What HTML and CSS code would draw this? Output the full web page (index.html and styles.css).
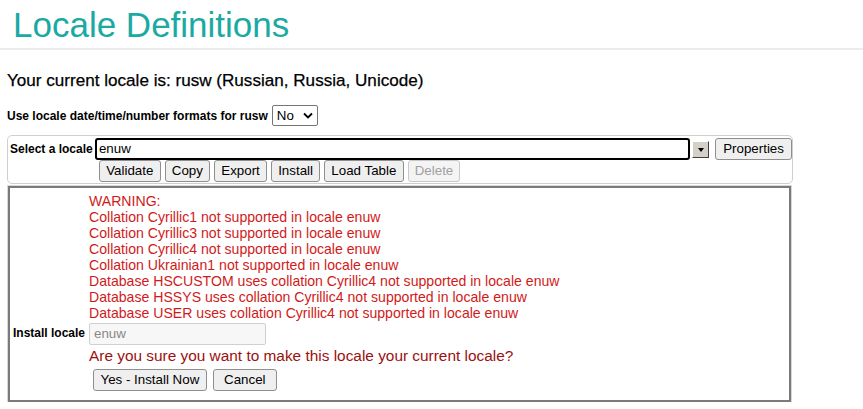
FILE: index.html
```html
<!DOCTYPE html>
<html>
<head>
<meta charset="utf-8">
<title>Locale Definitions</title>
<link rel="stylesheet" href="styles.css">
</head>
<body>
<div class="header">
  <h1 class="title">Locale Definitions</h1>
</div>
<div class="content">
  <div class="current">Your current locale is: rusw (Russian, Russia, Unicode)</div>
  <div class="formats">
    <span class="lbl">Use locale date/time/number formats for rusw</span>
    <div class="select">
      <span>No</span>
      <svg class="chev" width="10" height="7" viewBox="0 0 10 7"><path d="M1 1.5 L5 5.5 L9 1.5" fill="none" stroke="#000" stroke-width="1.8"/></svg>
    </div>
  </div>
  <div class="selbox">
    <div class="row1">
      <span class="lbl lbl-sel">Select a locale</span>
      <div class="combo">enuw</div>
      <div class="drop"><span class="tri"></span></div>
      <div class="btn btn-prop">Properties</div>
    </div>
    <div class="row2">
      <div class="btn">Validate</div>
      <div class="btn">Copy</div>
      <div class="btn">Export</div>
      <div class="btn">Install</div>
      <div class="btn">Load Table</div>
      <div class="btn btn-dis">Delete</div>
    </div>
  </div>
  <div class="panel">
    <div class="cell-empty"></div>
    <div class="warnings">
      <div>WARNING:</div>
      <div>Collation Cyrillic1 not supported in locale enuw</div>
      <div>Collation Cyrillic3 not supported in locale enuw</div>
      <div>Collation Cyrillic4 not supported in locale enuw</div>
      <div>Collation Ukrainian1 not supported in locale enuw</div>
      <div>Database HSCUSTOM uses collation Cyrillic4 not supported in locale enuw</div>
      <div>Database HSSYS uses collation Cyrillic4 not supported in locale enuw</div>
      <div>Database USER uses collation Cyrillic4 not supported in locale enuw</div>
    </div>
    <div class="lbl lbl-inst">Install locale</div>
    <div class="instcell"><div class="instinput">enuw</div></div>
    <div class="cell-empty"></div>
    <div class="question">Are you sure you want to make this locale your current locale?</div>
    <div class="cell-empty"></div>
    <div class="actions">
      <div class="btn">Yes - Install Now</div>
      <div class="btn btn-cancel">Cancel</div>
    </div>
  </div>
</div>
</body>
</html>
```
FILE: styles.css
```css
html, body {
  margin: 0;
  padding: 0;
  background: #fff;
  font-family: "Liberation Sans", Arial, sans-serif;
  color: #000;
}
.header {
  border-bottom: 2px solid #ececec;
  height: 50px;
  box-sizing: border-box;
  padding-left: 13px;
}
.title {
  margin: 0;
  padding-top: 5px;
  font-size: 35px;
  line-height: 40px;
  font-weight: normal;
  color: #1ba9a3;
}
.content {
  padding-left: 7px;
  width: 786px;
}
.current {
  margin-top: 21px;
  font-size: 17.1px;
  line-height: 20px;
  color: #000;
  -webkit-text-stroke: 0.25px #000;
}
.formats {
  display: flex;
  align-items: center;
  margin-top: 14px;
  height: 21px;
}
.lbl {
  font-weight: bold;
  font-size: 12px;
}
.select {
  margin-left: 4px;
  width: 46px;
  height: 21px;
  box-sizing: border-box;
  border: 1px solid #767676;
  border-radius: 2px;
  display: flex;
  align-items: center;
  justify-content: space-between;
  padding: 0 4px 0 4px;
  font-size: 13.33px;
}
.chev { display: block; }
.selbox {
  margin-top: 9px;
  border: 1px solid #cfcfcf;
  border-radius: 5px;
  height: 49px;
  box-sizing: border-box;
  padding: 2px 0 0 1px;
}
.row1 {
  display: flex;
  align-items: center;
  height: 22px;
}
.lbl-sel {
  width: 85px;
  padding-left: 1px;
}
.combo {
  width: 596px;
  height: 22px;
  box-sizing: border-box;
  border: 2px solid #000;
  border-radius: 3px;
  font-size: 13.33px;
  line-height: 18px;
  padding-left: 2px;
}
.drop {
  margin-left: 2px;
  width: 17px;
  height: 17px;
  box-sizing: border-box;
  background: #d4d0c8;
  border: 1px solid;
  border-color: #fff #404040 #404040 #fff;
  display: flex;
  align-items: center;
  justify-content: center;
}
.tri {
  width: 0;
  height: 0;
  border-left: 3.5px solid transparent;
  border-right: 3.5px solid transparent;
  border-top: 4px solid #000;
  margin-top: 1px;
}
.btn {
  height: 22px;
  box-sizing: border-box;
  border: 1px solid #8f8f8f;
  border-radius: 3px;
  background: #efefef;
  font-size: 13.33px;
  line-height: 20px;
  padding: 0 6.5px;
  color: #000;
  white-space: nowrap;
  text-align: center;
}
.btn-prop {
  margin-left: 6px;
  width: 77px;
  padding: 0;
}
.row2 {
  display: flex;
  gap: 4px;
  padding-left: 90px;
}
.row2 .btn {
  padding: 0 6.2px;
}
.btn-dis {
  color: #a0a0a0;
  border-color: #c8c8c8;
  background: #f4f4f4;
}
.panel {
  margin: 2px 0 0 1px;
  width: 783px;
  height: 216px;
  box-sizing: border-box;
  border: 2px solid #7a7a7a;
  box-shadow: 0 0 0 1px #d8d8d8;
  display: grid;
  grid-template-columns: 79px 1fr;
  align-content: start;
  padding-top: 5px;
}
.warnings {
  color: #d11a1a;
  font-size: 14.1px;
  line-height: 16px;
}
.lbl-inst {
  text-align: right;
  padding-right: 4px;
  align-self: center;
}
.instcell {
  padding-top: 2px;
}
.instinput {
  width: 177px;
  height: 22px;
  box-sizing: border-box;
  border: 1px solid #d0d0d0;
  border-radius: 2px;
  background: #f7f7f7;
  color: #888;
  font-size: 13.33px;
  line-height: 20px;
  padding-left: 4px;
}
.question {
  color: #9b1010;
  font-size: 15.4px;
  line-height: 22px;
}
.actions {
  display: flex;
  gap: 6px;
  padding-left: 4px;
  margin-top: 2px;
}
.btn-cancel {
  width: 64px;
}
```
